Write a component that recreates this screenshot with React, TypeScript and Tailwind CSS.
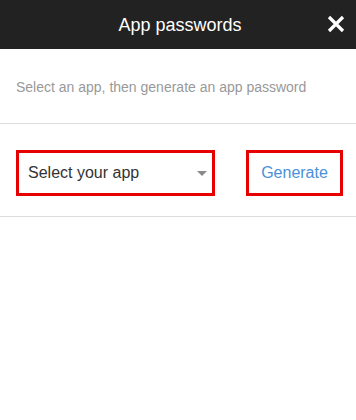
import { useState } from "react";

const apps = ["Select your app", "Mail", "Calendar", "Other (custom name)"];

export default function App() {
    const [app, setApp] = useState(apps[0]);
    return (
        <div className="w-[356px] h-[420px] bg-white font-['Liberation_Sans',Arial,sans-serif]">
            {/* Header */}
            <div className="relative flex items-center justify-center h-[49px] bg-[#222222]">
                <span className="text-[18px] text-white pl-[4px] pt-[2px]">App passwords</span>
                <button className="absolute right-[10px] top-[14px] w-[20px] h-[20px] flex items-center justify-center" title="Close">
                    <svg viewBox="0 0 20 20" className="w-[20px] h-[20px]">
                        <path d="M3 3 L17 17 M17 3 L3 17" stroke="white" strokeWidth={3.2} strokeLinecap="butt" />
                    </svg>
                </button>
            </div>
            {/* Hint */}
            <div className="px-4 pt-[29px] pb-[27px] border-b border-[#dddddd]">
                <p className="text-[14px] leading-[18px] text-[#999999]">
                    Select an app, then generate an app password
                </p>
            </div>
            {/* Controls */}
            <div className="flex items-center pl-4 pr-[13px] pt-[26px] pb-[20px] border-b border-[#dddddd]">
                <div className="relative w-[199px] h-[46px] border-[3px] border-[#e60000]">
                    <select
                        value={app}
                        onChange={(e) => setApp(e.target.value)}
                        className="appearance-none w-full h-full pl-[9px] pr-6 bg-white text-[16px] text-[#333333] outline-none"
                    >
                        {apps.map((a) => (
                            <option key={a}>{a}</option>
                        ))}
                    </select>
                    <svg viewBox="0 0 10 5" className="absolute right-[5px] top-[18px] w-[10px] h-[5px] pointer-events-none">
                        <path d="M0 0 L10 0 L5 5 Z" fill="#8a8a8a" />
                    </svg>
                </div>
                <button className="ml-auto w-[97px] h-[46px] border-[3px] border-[#e60000] text-[16px] text-[#4a90dc]">
                    Generate
                </button>
            </div>
        </div>
    );
}
